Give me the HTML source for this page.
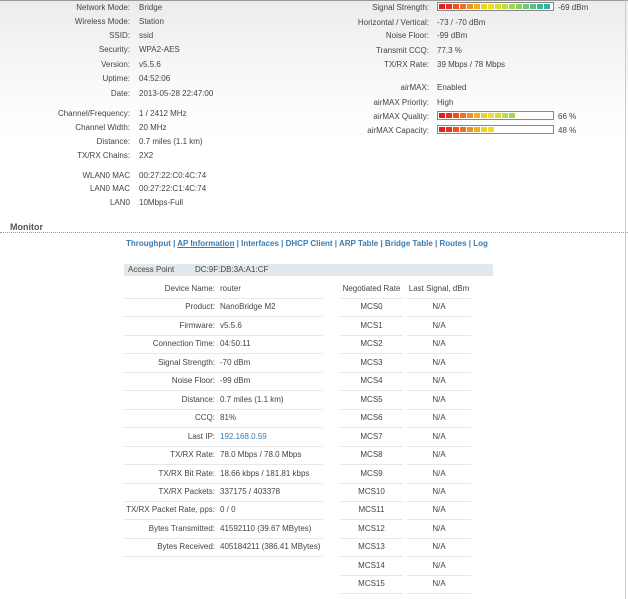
<!DOCTYPE html>
<html><head><meta charset="utf-8"><style>
body{margin:0;width:628px;height:599px;overflow:hidden;position:relative;font-family:"Liberation Sans",Arial,sans-serif;font-size:8px;color:#444;background:linear-gradient(#ececec 0,#fafafa 90px,#fff 140px)}
.top{position:absolute;left:0;top:0;width:628px;height:1px;background:#999}
.rb{position:absolute;right:2px;top:0;width:1px;height:599px;background:#ccc}
.l{position:absolute;text-align:right;white-space:nowrap}
.v{position:absolute;white-space:nowrap}
.bar{position:absolute;left:437px;width:117px;height:9px;border:1px solid #888;background:#fff;box-sizing:border-box;display:flex;padding:1px;gap:1px}
.bar i{display:block;width:6px;height:100%}
.mon{position:absolute;left:10px;top:222px;font-weight:bold;font-size:9px;color:#555}
.dots{position:absolute;left:0;top:232px;width:628px;border-top:1px dotted #999}
.links{position:absolute;left:126px;top:239px;font-size:8px;font-weight:bold;color:#3a7bb0;white-space:nowrap}
.links u{color:#3a7bb0}
.ap{position:absolute;left:124px;top:264px;width:369px;height:12px;background:#e2e8ec;font-size:8px;line-height:12px}
.row{position:absolute;height:18px;border-bottom:1px solid #e8e8e8;line-height:18px}
</style></head><body>
<div class="top"></div><div class="rb"></div>
<div id="c"></div>
<div class="mon">Monitor</div><div class="dots"></div>
<div class="links">Throughput | <u>AP Information</u> | Interfaces | DHCP Client | ARP Table | Bridge Table | Routes | Log</div>
<div class="ap"><span style="position:absolute;left:4px">Access Point</span><span style="position:absolute;left:71px">DC:9F:DB:3A:A1:CF</span></div>
<script>
var c=document.getElementById('c'),h='';
function L(x,y,t){h+='<div class="l" style="right:'+(628-x)+'px;top:'+(y-4)+'px">'+t+'</div>'}
function V(x,y,t,s){h+='<div class="v" style="left:'+x+'px;top:'+(y-4)+'px;'+(s||'')+'">'+t+'</div>'}
var lt=[[7,'Network Mode:','Bridge'],[21,'Wireless Mode:','Station'],[35,'SSID:','ssid'],[49,'Security:','WPA2-AES'],[64,'Version:','v5.5.6'],[78,'Uptime:','04:52:06'],[93,'Date:','2013-05-28 22:47:00'],[113,'Channel/Frequency:','1 / 2412 MHz'],[127,'Channel Width:','20 MHz'],[141,'Distance:','0.7 miles (1.1 km)'],[155,'TX/RX Chains:','2X2'],[175,'WLAN0 MAC','00:27:22:C0:4C:74'],[188,'LAN0 MAC','00:27:22:C1:4C:74'],[202,'LAN0','10Mbps-Full']];
lt.forEach(function(r){L(130,r[0],r[1]);V(139,r[0],r[2])});
var rt=[[7,'Signal Strength:',''],[22,'Horizontal / Vertical:','-73 / -70 dBm'],[35,'Noise Floor:','-99 dBm'],[50,'Transmit CCQ:','77.3 %'],[64,'TX/RX Rate:','39 Mbps / 78 Mbps'],[87,'airMAX:','Enabled'],[102,'airMAX Priority:','High'],[116,'airMAX Quality:',''],[130,'airMAX Capacity:','']];
rt.forEach(function(r){L(429,r[0],r[1]);V(437,r[0],r[2])});
var cols=['#e02020','#e83020','#f05020','#f07020','#f09020','#f0b020','#f0d020','#e8e020','#d0e030','#b8e040','#a0d850','#88d060','#70c870','#58c080','#40b890','#30b0b0','#20a8c8'];
function B(y,n,lab){var s='<div class="bar" style="top:'+(y-5)+'px">';for(var i=0;i<n;i++)s+='<i style="background:'+cols[i]+'"></i>';s+='</div>';h+=s;V(558,y,lab)}
B(7,16,'-69 dBm');B(116,11,'66 %');B(130,8,'48 %');
var lr=[['Device Name:','router'],['Product:','NanoBridge M2'],['Firmware:','v5.5.6'],['Connection Time:','04:50:11'],['Signal Strength:','-70 dBm'],['Noise Floor:','-99 dBm'],['Distance:','0.7 miles (1.1 km)'],['CCQ:','81%'],['Last IP:','<span style="color:#3a7bb0">192.168.0.59</span>'],['TX/RX Rate:','78.0 Mbps / 78.0 Mbps'],['TX/RX Bit Rate:','18.66 kbps / 181.81 kbps'],['TX/RX Packets:','337175 / 403378'],['TX/RX Packet Rate, pps:','0 / 0'],['Bytes Transmitted:','41592110 (39.67 MBytes)'],['Bytes Received:','405184211 (386.41 MBytes)']];
for(var i=0;i<17;i++){var y=280+i*18.45;
 if(i<15){h+='<div class="row" style="left:124px;top:'+y+'px;width:199px"><span style="position:absolute;right:108px">'+lr[i][0]+'</span><span style="position:absolute;left:96px">'+lr[i][1]+'</span></div>'}
 h+='<div class="row" style="left:340px;top:'+y+'px;width:63px;text-align:center">'+(i==0?'Negotiated Rate':'MCS'+(i-1))+'</div>';
 h+='<div class="row" style="left:407px;top:'+y+'px;width:64px;text-align:center">'+(i==0?'Last Signal, dBm':'N/A')+'</div>';
}
c.innerHTML=h;
</script>
</body></html>
